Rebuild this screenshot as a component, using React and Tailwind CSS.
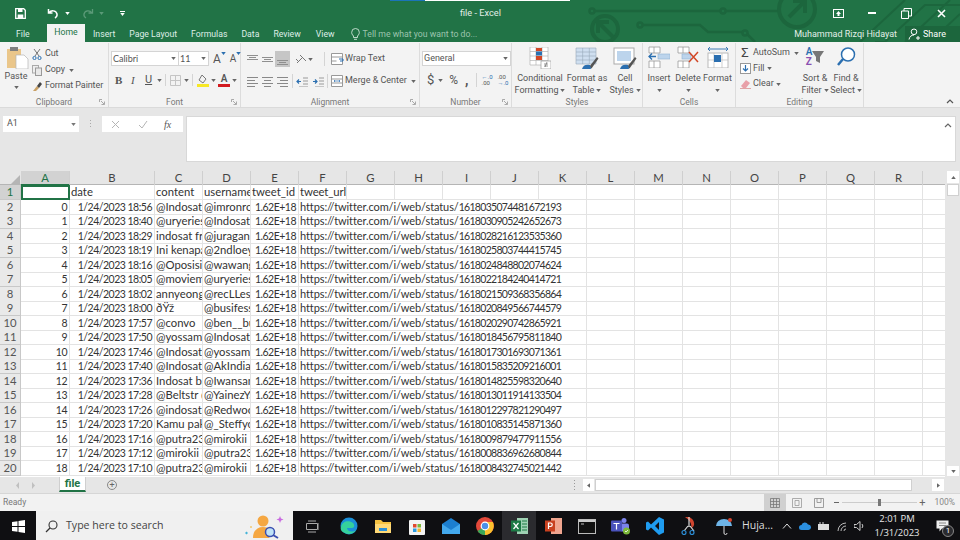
const rowGrid = "grid grid-cols-[21px_49px_85px_repeat(16,48px)_22px]";
const colLetters = "A B C D E F G H I J K L M N O P Q R".split(" ");

const rows = [
  ["0", "1/24/2023 18:56", "@IndosatCare halo", "@imronrosyadi", "1618035074481672193"],
  ["1", "1/24/2023 18:40", "@uryeries halo", "@IndosatCare", "1618030905242652673"],
  ["2", "1/24/2023 18:29", "indosat free", "@juraganpulsa", "1618028216123535360"],
  ["3", "1/24/2023 18:19", "Ini kenapa sih", "@2ndloey", "1618025803744415745"],
  ["4", "1/24/2023 18:16", "@OposisiCerdas", "@wawangsa", "1618024848802074624"],
  ["5", "1/24/2023 18:05", "@moviemenfess", "@uryeries", "1618022184240414721"],
  ["6", "1/24/2023 18:02", "annyeong", "@recLLes", "1618021509368356864"],
  ["7", "1/24/2023 18:00", "\u00F0\u0178\u017E", "@busifess", "1618020849566744579"],
  ["8", "1/24/2023 17:57", "@convo", "@ben__bu", "1618020290742865921"],
  ["9", "1/24/2023 17:50", "@yossamuel", "@IndosatCare", "1618018456795811840"],
  ["10", "1/24/2023 17:46", "@IndosatCare", "@yossamuel", "1618017301693071361"],
  ["11", "1/24/2023 17:40", "@IndosatCare", "@AkIndianto", "1618015835209216001"],
  ["12", "1/24/2023 17:36", "Indosat bayar", "@Iwansan", "1618014825598320640"],
  ["13", "1/24/2023 17:28", "@Beltstr @a", "@YainezYa", "1618013011914133504"],
  ["14", "1/24/2023 17:26", "@indosat", "@Redwoods", "1618012297821290497"],
  ["15", "1/24/2023 17:20", "Kamu pakai", "@_Steffycia", "1618010835145871360"],
  ["16", "1/24/2023 17:16", "@putra23", "@mirokii", "1618009879477911556"],
  ["17", "1/24/2023 17:12", "@mirokii apa", "@putra23", "1618008836962680844"],
  ["18", "1/24/2023 17:10", "@putra23", "@mirokii", "1618008432745021442"],
];

function Caret({ className = "" }) {
  return (
    <svg viewBox="0 0 6 4" className={"w-[5px] h-[3px] shrink-0 " + className}>
      <path d="M0 0h6L3 4z" fill="currentColor" />
    </svg>
  );
}

function Ico({ w = 14, h = 14, className = "", children }) {
  return (
    <svg width={w} height={h} viewBox={`0 0 ${w} ${h}`} className={"shrink-0 " + className}>
      {children}
    </svg>
  );
}

function TitleArt() {
  return (
    <svg width="960" height="42" viewBox="0 0 960 42" className="absolute inset-0 pointer-events-none" fill="none" stroke="#1c663d" strokeWidth="2.5">
      <circle cx="592" cy="11" r="2.5" />
      <path d="M594 11H721" />
      <circle cx="723" cy="11" r="2.5" />
      <path d="M725 11H778" />
      <circle cx="797" cy="9" r="18" strokeWidth="4" />
      <path d="M789 17l16-16M793 1h12v12" strokeWidth="4" />
      <circle cx="605" cy="29" r="13" strokeWidth="4" />
      <path d="M613 37L599 23M598 33V22h11" strokeWidth="4" />
      <circle cx="640" cy="25" r="2.5" />
      <path d="M642 25H700L708 32H743" />
      <circle cx="745" cy="33" r="2.5" />
      <path d="M747 34l8 8" />
      <path d="M860 42L905 0M875 42H885L925 5H960M905 42L950 0M930 42l30-28" strokeWidth="2" />
    </svg>
  );
}

function TitleBar() {
  return (
    <div className="relative h-[26px] flex items-center text-white">
      <div className="absolute top-0 left-[390px] w-[35px] h-px bg-[#1b74b8]" />
      <div className="absolute top-0 left-[425px] w-[145px] h-px bg-white" />
      <div className="relative ml-[15px] flex items-center">
        <Ico w={11} h={11}>
          <path d="M.7.7h8l1.6 1.6v8H.7z" fill="none" stroke="#fff" strokeWidth="1.3" />
          <path d="M3 1v3h4.5V1zM2.7 10V6.5h5.6V10z" fill="#fff" />
        </Ico>
        <Ico w={12} h={11} className="ml-[21px]">
          <path d="M1.5 1v4h4M2 5c2-3 7-3 8 1 .4 2-1 3.4-2 4" fill="none" stroke="#fff" strokeWidth="1.5" />
        </Ico>
        <Caret className="ml-[6px] text-white" />
        <Ico w={12} h={11} className="ml-[12px]">
          <path d="M10.5 1v4h-4M10 5C8 2 3 2 2 6c-.4 2 1 3.4 2 4" fill="none" stroke="#5b9a78" strokeWidth="1.3" />
        </Ico>
        <Caret className="ml-[5px] text-[#5b9a78]" />
        <div className="ml-[16px] flex flex-col items-center gap-px">
          <div className="w-[5px] h-px bg-white" />
          <Caret className="text-white" />
        </div>
      </div>
      <div className="absolute left-[460px] top-[6px] text-[9.2px] leading-[13px] text-[#e3efe8]">file - Excel</div>
      <div className="relative ml-auto flex items-center">
        <Ico w={11} h={9} className="mr-[24px]">
          <rect x=".5" y=".5" width="10" height="8" fill="none" stroke="#fff" />
          <path d="M5.5 2L8 5H3zM4.5 5h2v2h-2z" fill="#fff" />
        </Ico>
        <div className="w-[8px] h-[2px] bg-white mr-[25px]" />
        <Ico w={11} h={11} className="mr-[25px]">
          <path d="M.5 3h7v7.5h-7zM3 3V.5h7.5V8H8" fill="none" stroke="#fff" />
        </Ico>
        <Ico w={9} h={9} className="mr-[14px]">
          <path d="M1 1l7 7M8 1L1 8" stroke="#fff" strokeWidth="1.6" />
        </Ico>
      </div>
    </div>
  );
}

function Tabs() {
  return (
    <div className="relative h-[16px] flex items-end text-[8.7px] leading-[16px] text-[#dfeee6]">
      <span className="ml-[16px] w-[31px]">File</span>
      <div className="h-[18px] w-[38px] -mt-[2px] bg-[#f3f3f3] text-[#217346] text-center">Home</div>
      <span className="ml-[8px]">Insert</span>
      <span className="ml-[14px]">Page Layout</span>
      <span className="ml-[14px]">Formulas</span>
      <span className="ml-[14px]">Data</span>
      <span className="ml-[14px]">Review</span>
      <span className="ml-[15px]">View</span>
      <Ico w={9} h={12} className="ml-[16px] mb-[2px]">
        <path d="M2.5 8C1 6.5.7 5.5.7 4.3a3.8 3.8 0 0 1 7.6 0C8.3 5.5 8 6.5 6.5 8v1.5h-4zM3 11.3h3" fill="none" stroke="#cfe4d8" strokeWidth=".9" />
      </Ico>
      <span className="ml-[3px] text-[#9cc4ae]">Tell me what you want to do...</span>
      <span className="ml-auto text-[9px] text-[#e3efe8]">Muhammad Rizqi Hidayat</span>
      <div className="relative ml-[8px] w-[55px] h-[16px] bg-[#1c663d] flex items-center pl-[3px] text-[9px]">
        <Ico w={12} h={12}>
          <circle cx="6" cy="3.8" r="2.8" fill="none" stroke="#fff" />
          <path d="M1 11.5c.5-3 2.5-4.5 5-4.500M8 10h4M10 8v4" fill="none" stroke="#fff" />
        </Ico>
        <span className="ml-[3px] text-white">Share</span>
      </div>
    </div>
  );
}

function Launcher() {
  return (
    <Ico w={6} h={6} className="absolute right-[3px] bottom-[2px]">
      <path d="M.5 3V.5H3M2 2l3 3M5.5 2.5v3h-3" fill="none" stroke="#8a8a8a" strokeWidth=".7" />
    </Ico>
  );
}

function Group({ label, className, launcher, children }) {
  return (
    <div className={"relative shrink-0 flex flex-col mt-px border-r border-[#dcdcdc] " + className}>
      <div className="h-[54px] flex">{children}</div>
      <div className="text-center text-[8.5px] leading-[10px] text-[#777]">{label}</div>
      {launcher && <Launcher />}
    </div>
  );
}

function AlignLines({ kind }) {
  const lens = kind === "left" ? [[0, 11], [0, 8], [0, 11], [0, 8]] : kind === "right" ? [[0, 11], [3, 8], [0, 11], [3, 8]] : [[0, 11], [2, 7], [0, 11], [2, 7]];
  return (
    <Ico w={11} h={11}>
      {lens.map(([x, l], i) => (
        <rect key={i} x={x} y={1 + i * 3} width={l} height="1" fill="#888" />
      ))}
    </Ico>
  );
}

function VAlign({ pos }) {
  const start = pos === "top" ? 1 : pos === "mid" ? 3 : 6;
  return (
    <Ico w={11} h={11}>
      {[0, 2, 4].map((d, i) => (
        <rect key={i} x={i === 1 ? 2 : 0} y={start + d} width={i === 1 ? 7 : 11} height="1" fill="#8f8f8f" />
      ))}
    </Ico>
  );
}

function BigBtn({ className = "", icon, l1, l2 }) {
  return (
    <div className={"flex flex-col items-center text-[9px] leading-[12px] text-[#555] shrink-0 " + className}>
      <div className="h-[24px] mt-[3px] flex items-center">{icon}</div>
      <span className="mt-[2px] whitespace-nowrap">{l1}</span>
      <span className="flex items-center gap-[2px] whitespace-nowrap">
        {l2}
        <Caret className="text-[#666]" />
      </span>
    </div>
  );
}

function SmallGrid({ x = 0, y = 0, w = 18, h = 18, color = "#aaa" }) {
  const lines = [];
  for (let i = 0; i <= 3; i++) lines.push(<path key={"v" + i} d={`M${x + (w * i) / 3} ${y}v${h}`} stroke={color} strokeWidth=".6" />);
  for (let i = 0; i <= 4; i++) lines.push(<path key={"h" + i} d={`M${x} ${y + (h * i) / 4}h${w}`} stroke={color} strokeWidth=".6" />);
  return <g>{lines}</g>;
}

function Ribbon() {
  return (
    <div className="h-[66px] bg-[#f3f3f3] flex border-b border-[#dadada] overflow-hidden">
      {/* clipboard */}
      <Group label="Clipboard" className="w-[109px]" launcher>
        <div className="w-[32px] flex flex-col items-center text-[9px] leading-[12px] text-[#555]">
          <Ico w={23} h={23} className="mt-[3px] ml-[2px]">
            <rect x="1" y="3" width="14" height="19" fill="#eac68a" />
            <rect x="4" y="1" width="8" height="4" fill="#7f7f7f" />
            <path d="M10 9h8l4 4v10H10z" fill="#fff" stroke="#b5b5b5" strokeWidth=".7" />
          </Ico>
          <span className="mt-px">Paste</span>
          <Caret className="mt-[4px] text-[#666]" />
        </div>
        <div className="flex flex-col mt-[3px] text-[9px] text-[#555] tracking-[-0.1px]">
          <div className="h-[16px] flex items-center">
            <Ico w={10} h={12}>
              <path d="M2 1l5 7M8 1L3 8" stroke="#666" strokeWidth=".9" />
              <circle cx="2.5" cy="10" r="1.6" fill="none" stroke="#2b6fb0" />
              <circle cx="7.5" cy="10" r="1.6" fill="none" stroke="#2b6fb0" />
            </Ico>
            <span className="ml-[3px]">Cut</span>
          </div>
          <div className="h-[16px] flex items-center">
            <Ico w={10} h={11}>
              <rect x=".5" y=".5" width="6" height="7.5" fill="#eee" stroke="#aaa" />
              <rect x="3.5" y="3" width="6" height="7.5" fill="#e8e8e8" stroke="#999" />
            </Ico>
            <span className="ml-[3px]">Copy</span>
            <Caret className="ml-[4px] text-[#666]" />
          </div>
          <div className="h-[16px] flex items-center">
            <Ico w={11} h={11}>
              <path d="M1 10l4-5 2 2-3 3z" fill="#c9a064" />
              <path d="M5 5l3-4 2 2-3 4z" fill="#444" />
            </Ico>
            <span className="ml-[2px]">Format Painter</span>
          </div>
        </div>
      </Group>
      {/* font */}
      <Group label="Font" className="w-[132px]" launcher>
        <div className="flex flex-col pl-[2px] text-[#444]">
          <div className="flex items-center mt-[8px] h-[15px]">
            <div className="w-[68px] h-[15px] bg-white border border-[#d4d4d4] flex items-center justify-between px-px text-[9px] text-[#555] font-['Lato',sans-serif]">
              Calibri
              <Caret className="mr-px text-[#666]" />
            </div>
            <div className="w-[30px] h-[15px] bg-white border border-l-0 border-[#d4d4d4] flex items-center justify-between px-px text-[9px] text-[#555] font-['Lato',sans-serif]">
              11
              <Caret className="mr-px text-[#666]" />
            </div>
            <span className="ml-[4px] text-[12px] leading-[14px] text-[#555]">A</span>
            <Caret className="-mt-[10px] text-[#2b6fb0]" />
            <span className="ml-[4px] text-[10px] leading-[14px] text-[#555]">A</span>
            <Caret className="-mt-[10px] text-[#2b6fb0]" />
          </div>
          <div className="flex items-center mt-[6px] h-[16px] text-[#555]">
            <span className="ml-[4px] w-[16px] text-[11px] font-bold font-['Liberation_Serif',serif]">B</span>
            <span className="w-[14px] text-[11px] italic font-['Liberation_Serif',serif]">I</span>
            <span className="w-[12px] text-[11px] underline">U</span>
            <Caret className="text-[#666]" />
            <div className="w-px h-[12px] bg-[#d4d4d4] ml-[3px]" />
            <Ico w={11} h={11} className="ml-[4px]">
              <path d="M.5.5h10v10H.5zM5.5.5v10M.5 5.5h10" fill="none" stroke="#c5c5c5" />
            </Ico>
            <Caret className="ml-[3px] text-[#666]" />
            <div className="w-px h-[12px] bg-[#d4d4d4] ml-[3px]" />
            <Ico w={12} h={13} className="ml-[4px]">
              <path d="M5 1l4 4-3 4-4-3z" fill="none" stroke="#777" />
              <rect x="0" y="10" width="12" height="3" fill="#f7e826" />
            </Ico>
            <Caret className="ml-[2px] text-[#666]" />
            <div className="ml-[2px] w-[12px] flex flex-col items-center">
              <span className="text-[10px] leading-[10px] font-semibold text-[#555]">A</span>
              <div className="w-[12px] h-[3px] bg-[#d21a1f]" />
            </div>
            <Caret className="ml-[2px] text-[#666]" />
          </div>
        </div>
      </Group>
      {/* alignment */}
      <Group label="Alignment" className="w-[179px]" launcher>
        <div className="flex flex-col pl-[4px]">
          <div className="flex items-center h-[16px] mt-[8px]">
            <div className="w-[15px] flex justify-center"><VAlign pos="top" /></div>
            <div className="w-[15px] flex justify-center"><VAlign pos="mid" /></div>
            <div className="w-[15px] h-[16px] flex items-center justify-center bg-[#c6c6c6]"><VAlign pos="bot" /></div>
            <Ico w={12} h={12} className="ml-[5px]">
              <path d="M2 10l6-6M5 2l6 6M1 6l3 3" fill="none" stroke="#777" />
            </Ico>
            <Caret className="ml-px text-[#666]" />
            <div className="w-px h-[14px] bg-[#d4d4d4] ml-[11px]" />
            <Ico w={13} h={12} className="ml-[6px]">
              <path d="M.5.5h11v11H.5zM.5 4h11M.5 8h5" fill="#fff" stroke="#999" />
              <path d="M8 6h4v2H9" fill="none" stroke="#2b6fb0" />
            </Ico>
            <span className="ml-px text-[9px] text-[#555] whitespace-nowrap">Wrap Text</span>
          </div>
          <div className="flex items-center h-[16px] mt-[6px]">
            <div className="w-[15px] flex justify-center"><AlignLines kind="left" /></div>
            <div className="w-[15px] flex justify-center"><AlignLines kind="center" /></div>
            <div className="w-[15px] flex justify-center"><AlignLines kind="right" /></div>
            <div className="w-px h-[14px] bg-[#d4d4d4] ml-[2px]" />
            <Ico w={12} h={11} className="ml-[3px]">
              <path d="M7 2h5M7 5h5M7 8h5M3 11h9" stroke="#999" />
              <path d="M5 5.5H1M3 3.5l-2 2 2 2" fill="none" stroke="#2b6fb0" strokeWidth="1.2" />
            </Ico>
            <Ico w={12} h={11} className="ml-[4px]">
              <path d="M7 2h5M7 5h5M7 8h5M3 11h9" stroke="#999" />
              <path d="M1 5.5h4M3 3.5l2 2-2 2" fill="none" stroke="#2b6fb0" strokeWidth="1.2" />
            </Ico>
            <div className="w-px h-[14px] bg-[#d4d4d4] ml-[3px]" />
            <Ico w={13} h={12} className="ml-[3px]">
              <path d="M.5.5h11v11H.5zM.5 4h11M.5 8h11" fill="#fff" stroke="#999" />
              <path d="M3 6h6M4 5L3 6l1 1M8 5l1 1-1 1" fill="none" stroke="#2b6fb0" strokeWidth=".7" />
            </Ico>
            <span className="ml-px text-[9px] text-[#555] whitespace-nowrap">Merge &amp; Center</span>
            <Caret className="ml-[4px] text-[#666]" />
          </div>
        </div>
      </Group>
      {/* number */}
      <Group label="Number" className="w-[92px]" launcher>
        <div className="flex flex-col pl-[2px]">
          <div className="w-[89px] h-[15px] mt-[8px] bg-white border border-[#d4d4d4] flex items-center justify-between px-px text-[9px] text-[#555]">
            General
            <Caret className="mr-px text-[#666]" />
          </div>
          <div className="flex items-center h-[16px] mt-[6px] text-[#555]">
            <span className="ml-[5px] text-[13px] leading-[16px]">$</span>
            <Caret className="ml-[4px] text-[#666]" />
            <span className="ml-[6px] text-[12px] leading-[16px]">%</span>
            <span className="ml-[7px] text-[14px] leading-[12px] font-bold">,</span>
            <div className="w-px h-[14px] bg-[#d4d4d4] ml-[7px]" />
            <div className="ml-[5px] flex flex-col text-[6px] leading-[6px]">
              <span className="text-[#2b6fb0]">←.0</span>
              <span>.00</span>
            </div>
            <div className="ml-[5px] flex flex-col text-[6px] leading-[6px]">
              <span>.00</span>
              <span className="text-[#2b6fb0]">→.0</span>
            </div>
          </div>
        </div>
      </Group>
      {/* styles */}
      <Group label="Styles" className="w-[131px]">
        <BigBtn
          className="w-[50px] ml-[3px]"
          l1="Conditional"
          l2="Formatting"
          icon={
            <Ico w={22} h={22}>
              <rect x="1" y="0" width="18" height="18" fill="#fff" />
              <SmallGrid x={1} y={0} w={18} h={18} />
              <rect x="7" y="4.5" width="6" height="4" fill="#2b6fb0" />
              <rect x="7" y="9" width="6" height="4" fill="#d24726" />
              <rect x="7" y="1" width="6" height="3" fill="#d24726" />
              <rect x="12" y="14" width="10" height="8" fill="#fff" stroke="#999" strokeWidth=".7" />
              <path d="M15 19h4M15 17h4M16 20l2-5" stroke="#555" strokeWidth=".6" />
            </Ico>
          }
        />
        <BigBtn
          className="w-[42px] ml-px"
          l1="Format as"
          l2="Table"
          icon={
            <Ico w={24} h={22}>
              <rect x="1" y="1" width="20" height="16" fill="#cfdff0" />
              <SmallGrid x={1} y={1} w={20} h={16} color="#9ab" />
              <path d="M14 20l8-10 1.5 1.5-7 10z" fill="#555" />
              <path d="M7 22c1-4 4-5 8-4l1 4z" fill="#2b6fb0" />
            </Ico>
          }
        />
        <BigBtn
          className="w-[32px] ml-px"
          l1="Cell"
          l2="Styles"
          icon={
            <Ico w={24} h={22}>
              <rect x="1" y="1" width="20" height="16" fill="#fff" stroke="#aaa" />
              <rect x="4" y="4" width="14" height="10" fill="#bcd4ec" />
              <path d="M14 20l8-10 1.5 1.5-7 10z" fill="#555" />
              <path d="M7 22c1-4 4-5 8-4l1 4z" fill="#2b6fb0" />
            </Ico>
          }
        />
      </Group>
      {/* cells */}
      <Group label="Cells" className="w-[93px]">
        <div className="ml-[3px] w-[26px] flex flex-col items-center text-[9px] leading-[12px] text-[#555]">
          <Ico w={22} h={22} className="mt-[3px]">
            <path d="M1 1h11v6H1zM1 15h11v7H1zM6 1v6M6 15v7" fill="#fff" stroke="#999" strokeWidth=".8" />
            <rect x="10" y="8" width="12" height="5" fill="#bcd4ec" stroke="#8fb2d4" strokeWidth=".6" />
            <path d="M8 10.5H1M4 7.5l-3 3 3 3" fill="none" stroke="#2b6fb0" strokeWidth="1.3" />
          </Ico>
          <span className="mt-[4px]">Insert</span>
          <Caret className="mt-[5px] text-[#666]" />
        </div>
        <div className="ml-[2px] w-[28px] flex flex-col items-center text-[9px] leading-[12px] text-[#555]">
          <Ico w={22} h={22} className="mt-[3px]">
            <path d="M1 1h11v6H1zM1 15h11v7H1zM6 1v6M6 15v7" fill="#fff" stroke="#999" strokeWidth=".8" />
            <rect x="5" y="8" width="9" height="5" fill="#bcd4ec" stroke="#8fb2d4" strokeWidth=".6" />
            <path d="M12 6l9 10M21 6l-9 10" stroke="#d24726" strokeWidth="1.5" />
          </Ico>
          <span className="mt-[4px]">Delete</span>
          <Caret className="mt-[5px] text-[#666]" />
        </div>
        <div className="w-[31px] flex flex-col items-center text-[9px] leading-[12px] text-[#555]">
          <Ico w={22} h={22} className="mt-[3px]">
            <path d="M1 3h20M3 1L1 3l2 2M19 1l2 2-2 2" fill="none" stroke="#2b6fb0" strokeWidth=".9" />
            <rect x="1" y="7" width="20" height="15" fill="#fff" stroke="#aaa" strokeWidth=".8" />
            <path d="M7 7v15M15 7v15M1 14h20" stroke="#bbb" strokeWidth=".7" />
            <rect x="7" y="9" width="7" height="7" fill="#2b6fb0" />
          </Ico>
          <span className="mt-[4px]">Format</span>
          <Caret className="mt-[5px] text-[#666]" />
        </div>
      </Group>
      {/* editing */}
      <Group label="Editing" className="w-[128px]">
        <div className="w-[61px] ml-[3px] flex flex-col text-[9px] text-[#555]">
          <div className="h-[16px] mt-[2px] flex items-center">
            <span className="w-[12px] text-center text-[13px] leading-[14px] text-[#444]">Σ</span>
            <span className="ml-[2px]">AutoSum</span>
            <Caret className="ml-[4px] text-[#666]" />
          </div>
          <div className="h-[15px] flex items-center">
            <Ico w={11} h={11} className="ml-px">
              <rect x=".5" y=".5" width="10" height="10" fill="#fff" stroke="#999" />
              <path d="M5.5 2v6M3 5.5L5.5 8 8 5.5" fill="none" stroke="#2b6fb0" strokeWidth="1.2" />
            </Ico>
            <span className="ml-[2px]">Fill</span>
            <Caret className="ml-[2px] text-[#666]" />
          </div>
          <div className="h-[16px] flex items-center">
            <Ico w={11} h={10} className="ml-px">
              <path d="M1 7l5-6 4 3-4 5H3z" fill="#e8a0a8" />
              <path d="M0 10h11" stroke="#c55" />
            </Ico>
            <span className="ml-[2px]">Clear</span>
            <Caret className="ml-[2px] text-[#666]" />
          </div>
        </div>
        <div className="w-[30px] flex flex-col items-center text-[9px] leading-[12px] text-[#555]">
          <div className="mt-[3px] h-[22px] flex items-center">
            <div className="flex flex-col text-[10px] leading-[10px] font-semibold">
              <span className="text-[#2b6fb0]">A</span>
              <span className="text-[#8a4fb0]">Z</span>
            </div>
            <Ico w={12} h={13}>
              <path d="M0 0h12L8 6v6L4 10V6z" fill="#777" />
            </Ico>
          </div>
          <span className="mt-[4px] whitespace-nowrap">Sort &amp;</span>
          <span className="flex items-center gap-[2px] whitespace-nowrap">Filter<Caret className="text-[#666]" /></span>
        </div>
        <div className="w-[30px] ml-px flex flex-col items-center text-[9px] leading-[12px] text-[#555]">
          <Ico w={22} h={22} className="mt-[3px]">
            <circle cx="13" cy="8.5" r="6.5" fill="#fff" stroke="#2b6fb0" strokeWidth="1.5" />
            <path d="M8 13l-5 6" stroke="#2b6fb0" strokeWidth="2.5" />
          </Ico>
          <span className="mt-[4px] whitespace-nowrap">Find &amp;</span>
          <span className="flex items-center gap-[2px] whitespace-nowrap">Select<Caret className="text-[#666]" /></span>
        </div>
      </Group>
      <div className="flex-1 relative">
        <Ico w={8} h={5} className="absolute right-[6px] bottom-[3px]">
          <path d="M1 4l3-3 3 3" fill="none" stroke="#555" strokeWidth="1.2" />
        </Ico>
      </div>
    </div>
  );
}

function FormulaBar() {
  return (
    <div className="h-[63px] bg-[#e6e6e6] flex pt-[8px] pl-[3px] pr-[4px]">
      <div className="w-[76px] h-[16px] bg-white flex items-center justify-between pl-[4px] pr-[3px] text-[9px] text-[#555]">
        A1
        <Caret className="text-[#777]" />
      </div>
      <div className="w-[23px] flex flex-col items-center gap-[2px] pt-[4px]">
        <div className="size-px bg-[#aaa]" />
        <div className="size-px bg-[#aaa]" />
        <div className="size-px bg-[#aaa]" />
      </div>
      <div className="w-[81px] h-[16px] bg-white flex items-center">
        <Ico w={9} h={9} className="ml-[9px]">
          <path d="M1 1l7 7M8 1L1 8" stroke="#b5b5b5" />
        </Ico>
        <Ico w={10} h={9} className="ml-[18px]">
          <path d="M1 5l3 3 5-7" fill="none" stroke="#b5b5b5" />
        </Ico>
        <span className="ml-[16px] text-[10px] italic text-[#555] font-['Liberation_Serif',serif]">fx</span>
      </div>
      <div className="ml-[3px] relative flex-1 h-[46px] bg-white border border-[#d8d8d8]">
        <Ico w={8} h={5} className="absolute right-[3px] top-[6px]">
          <path d="M1 4l3-3 3 3" fill="none" stroke="#666" strokeWidth="1.2" />
        </Ico>
      </div>
    </div>
  );
}

function Cell({ className = "", children }) {
  return (
    <div className={"border-r border-b border-[#e3e3e3] overflow-hidden whitespace-nowrap pl-px pr-[2px] leading-[14px] " + className}>
      {children}
    </div>
  );
}

function RowHead({ n, active }) {
  return (
    <div className={"text-center leading-[14px] text-[#555] border-r border-b border-[#c8c8c8] " + (active ? "bg-[#d2d2d2] text-[#217346]" : "bg-[#e9e9e9]")}>
      {n}
    </div>
  );
}

// Calibri digits are much narrower than Lato's, so number runs get tightened
const numCell = "text-right text-[10.5px] tracking-[-0.5px]";

function Sheet() {
  return (
    <div className="h-[306px] flex bg-[#e6e6e6]">
      <div className="w-[945px] flex flex-col overflow-hidden text-[11.3px] text-[#333] font-['Lato',sans-serif]">
        <div className={rowGrid + " h-[14px] bg-[#e6e6e6] border-b border-[#b5b5b5] text-[#444]"}>
          <div className="relative">
            <div className="absolute right-px bottom-px w-0 h-0 border-l-[10px] border-l-transparent border-b-[10px] border-b-[#b5b5b5]" />
          </div>
          {colLetters.map((c, i) => (
            <div key={c} className={"text-center leading-[13px] border-r border-[#cfcfcf] " + (i === 0 ? "bg-[#d2d2d2] text-[#217346] border-b-2 border-b-[#217346]" : "")}>
              {c}
            </div>
          ))}
          <div />
        </div>
        <div className="flex-1 bg-white overflow-hidden">
          <div className={rowGrid + " h-[14.5px]"}>
            <RowHead n="1" active />
            <div className="border-2 border-[#217346]" />
            <Cell>date</Cell>
            <Cell>content</Cell>
            <Cell>username</Cell>
            <Cell>tweet_id</Cell>
            <Cell className="tracking-[-0.1px]">tweet_url</Cell>
            {colLetters.slice(6).map((c) => <Cell key={c} />)}
            <Cell className="border-r-0" />
          </div>
          {rows.map((r, i) => (
            <div key={i} className={rowGrid + " h-[14.5px]"}>
              <RowHead n={i + 2} />
              <Cell className={numCell}>{r[0]}</Cell>
              <Cell className={numCell}>{r[1]}</Cell>
              <Cell className="pl-[2px]">{r[2]}</Cell>
              <Cell>{r[3]}</Cell>
              <Cell className={numCell}>1.62E+18</Cell>
              <Cell className="col-span-6 text-[11px] tracking-[-0.1px]">
                https://twitter.com/i/web/status/<span className="text-[10.5px] tracking-[-0.7px]">{r[4]}</span>
              </Cell>
              {colLetters.slice(11).map((c) => <Cell key={c} />)}
              <Cell className="border-r-0" />
            </div>
          ))}
        </div>
      </div>
      <div className="flex-1 flex flex-col items-center bg-[#e6e6e6] pl-px">
        <div className="size-[12px] bg-white flex items-center justify-center">
          <Caret className="rotate-180 text-[#666]" />
        </div>
        <div className="size-[12px] mt-px bg-white border border-[#d0d0d0]" />
        <div className="flex-1" />
        <div className="w-[12px] h-[10px] mb-px bg-white flex items-center justify-center">
          <Caret className="text-[#666]" />
        </div>
      </div>
    </div>
  );
}

function SheetBar() {
  return (
    <div className="h-[17px] bg-[#e6e6e6] flex items-start border-b border-[#d6d6d6]">
      <Ico w={5} h={7} className="ml-[15px] mt-[5px]">
        <path d="M4 0L1 3.5 4 7z" fill="#c0c0c0" />
      </Ico>
      <Ico w={5} h={7} className="ml-[11px] mt-[5px]">
        <path d="M1 0l3 3.5L1 7z" fill="#c0c0c0" />
      </Ico>
      <div className="ml-[23px] w-[27px] h-[15px] bg-white border-b-2 border-b-[#217346] border-x border-x-[#cfcfcf] text-center text-[11px] leading-[13px] font-bold text-[#217346]">file</div>
      <div className="ml-[21px] mt-[3px] size-[10px] rounded-full border border-[#888] flex items-center justify-center text-[9px] leading-[8px] text-[#666]">+</div>
      <div className="ml-[457px] mt-[3px] flex flex-col gap-[2px]">
        <div className="size-px bg-[#999]" />
        <div className="size-px bg-[#999]" />
        <div className="size-px bg-[#999]" />
        <div className="size-px bg-[#999]" />
      </div>
      <div className="ml-[8px] mt-[2px] w-[11px] h-[12px] bg-white flex items-center justify-center">
        <Caret className="rotate-90 text-[#666]" />
      </div>
      <div className="ml-px mt-[2px] w-[317px] h-[12px] bg-white border border-[#d0d0d0]" />
      <div className="ml-[20px] mt-[2px] size-[12px] bg-white flex items-center justify-center">
        <Caret className="-rotate-90 text-[#666]" />
      </div>
    </div>
  );
}

function StatusBar() {
  return (
    <div className="h-[17px] bg-[#f2f2f2] flex items-center text-[8.5px] text-[#777]">
      <span className="ml-[3px]">Ready</span>
      <div className="ml-auto flex items-center h-full">
        <div className="w-[22px] h-full bg-[#d0d0d0] flex items-center justify-center">
          <Ico w={10} h={10}>
            <path d="M.5.5h9v9h-9zM3.5.5v9M6.5.5v9M.5 3.5h9M.5 6.5h9" fill="none" stroke="#777" strokeWidth=".8" />
          </Ico>
        </div>
        <div className="w-[22px] flex justify-center">
          <Ico w={10} h={10}>
            <path d="M.5.5h9v9h-9zM3 2.5h4v5H3z" fill="none" stroke="#999" strokeWidth=".8" />
          </Ico>
        </div>
        <div className="w-[22px] flex justify-center">
          <Ico w={10} h={10}>
            <path d="M.5 9.5v-9h9v9zM3 .5v4h4v-4" fill="none" stroke="#888" strokeWidth=".8" />
          </Ico>
        </div>
        <div className="ml-[4px] w-[5px] h-px bg-[#666]" />
        <div className="relative ml-[3px] w-[75px] h-px bg-[#ccc]">
          <div className="absolute left-[36px] -top-[3px] w-[3px] h-[7px] bg-[#777]" />
        </div>
        <span className="ml-[2px] text-[11px] leading-[10px] text-[#666]">+</span>
        <span className="ml-[9px] mr-[5px] text-[8.5px] text-[#888]">100%</span>
      </div>
    </div>
  );
}

function Slot({ active, children }) {
  return (
    <div className={"relative w-[34px] h-[30px] flex items-center justify-center shrink-0 " + (active ? "bg-[#2b2b2f]" : "")}>
      {children}
      <div className="absolute bottom-0 left-[3px] right-[3px] h-px bg-[#76b9ed]" />
    </div>
  );
}

function Taskbar() {
  return (
    <div className="h-[30px] bg-[#0f0f12] flex items-center">
      <div className="w-[36px] flex justify-center">
        <Ico w={13} h={13}>
          <path d="M0 2l5.5-.8V6H0zM6.5 1L13 0v6H6.5zM0 7h5.5v4.8L0 11zM6.5 7H13v6l-6.5-1z" fill="#fff" />
        </Ico>
      </div>
      <div className="w-[257px] h-[30px] bg-[#f0f0f0] flex items-center relative">
        <Ico w={13} h={13} className="ml-[9px]">
          <circle cx="8" cy="5" r="4" fill="none" stroke="#333" strokeWidth="1.1" />
          <path d="M5 8L1 12" stroke="#333" strokeWidth="1.3" />
        </Ico>
        <span className="ml-[8px] text-[10.6px] text-[#444] font-['Open_Sans',sans-serif]">Type here to search</span>
        <Ico w={44} h={26} className="absolute left-[206px] top-[2px]">
          <path d="M3 20l1.5-1.5L6 20l-1.5 1.5z" fill="#45b4d8" />
          <path d="M8 14l1-1 1 1-1 1z" fill="#f2b632" />
          <circle cx="21" cy="8" r="5.5" fill="#f5a742" />
          <path d="M11 25c0-7 4-11 10-11s9 3 9 6l-3 5z" fill="#f5a742" />
          <circle cx="28" cy="19" r="4.5" fill="#bfe2f7" stroke="#3a4fb0" strokeWidth="1.5" />
          <path d="M31 22l5 3" stroke="#3a4fb0" strokeWidth="2" />
          <path d="M38 3l1 2.5 2.5 1-2.5 1-1 2.5-1-2.5-2.5-1 2.5-1z" fill="#c86ae0" />
        </Ico>
      </div>
      <div className="w-[39px] flex justify-center">
        <Ico w={13} h={13}>
          <path d="M2 1h8M2 12h8M.5 3.5h11v6H.5zM13 3v7" fill="none" stroke="#aaa" />
        </Ico>
      </div>
      <Slot>
        <Ico w={18} h={18}>
          <circle cx="9" cy="9" r="8.5" fill="#1a8fd8" />
          <path d="M1 10c1-6 8-7 12-4 2 2 1.5 5-1 5H7c0 3 5 5 9 2-2 4-8 5-11 3-3-1-5-3-4-6z" fill="#35d09c" />
        </Ico>
      </Slot>
      <Slot>
        <Ico w={18} h={16}>
          <path d="M1 2h6l2 2h8v11H1z" fill="#f5c242" />
          <rect x="1" y="6" width="16" height="9" fill="#ffd976" />
          <rect x="5" y="10" width="8" height="3" fill="#2b8fd8" />
        </Ico>
      </Slot>
      <Slot>
        <Ico w={16} h={17}>
          <rect x="0" y="2" width="16" height="15" rx="1" fill="#f3f3f3" />
          <rect x="4" y="6" width="3.5" height="3.5" fill="#e2492f" />
          <rect x="8.5" y="6" width="3.5" height="3.5" fill="#7db93a" />
          <rect x="4" y="10.5" width="3.5" height="3.5" fill="#2b9be0" />
          <rect x="8.5" y="10.5" width="3.5" height="3.5" fill="#f2b632" />
        </Ico>
      </Slot>
      <Slot>
        <Ico w={18} h={16}>
          <path d="M0 6l9-6 9 6v10H0z" fill="#1c7fd0" />
          <path d="M0 6l9 6 9-6v10H0z" fill="#43a9ee" />
        </Ico>
      </Slot>
      <Slot>
        <Ico w={18} h={18}>
          <circle cx="9" cy="9" r="9" fill="#e3483a" />
          <path d="M9 9l-7.5 5a9 9 0 0 0 9 3.8z" fill="#3aa757" />
          <path d="M9 5h7.8A9 9 0 0 1 9 18z" fill="#fbc02d" />
          <circle cx="9" cy="9" r="3.8" fill="#4b8fe8" stroke="#fff" strokeWidth="1.2" />
        </Ico>
      </Slot>
      <Slot active>
        <Ico w={17} h={16}>
          <rect x="6" y="0" width="11" height="16" fill="#9fd2b4" />
          <rect x="0" y="2.5" width="10" height="11" fill="#1c7a45" />
          <path d="M11 3h5M11 6h5M11 9h5M11 12h5" stroke="#1c7a45" />
          <path d="M2.5 5l5 6M7.5 5l-5 6" stroke="#fff" strokeWidth="1.2" />
        </Ico>
      </Slot>
      <Slot>
        <Ico w={17} h={16}>
          <rect x="6" y="0" width="11" height="16" fill="#f0a58f" />
          <rect x="0" y="2.5" width="10" height="11" fill="#c8401f" />
          <path d="M3.5 11V5h2a1.5 1.5 0 0 1 0 3.5h-2" fill="none" stroke="#fff" strokeWidth="1.2" />
        </Ico>
      </Slot>
      <Slot>
        <Ico w={18} h={15}>
          <rect x=".5" y=".5" width="17" height="14" fill="#111" stroke="#bbb" />
          <rect x="1" y="1" width="16" height="2" fill="#ccc" />
          <path d="M3 5h3" stroke="#bbb" />
        </Ico>
      </Slot>
      <Slot>
        <Ico w={20} h={18}>
          <circle cx="13" cy="3.5" r="2.5" fill="#7b83eb" />
          <rect x="9" y="6.5" width="9" height="8" rx="2" fill="#7b83eb" />
          <rect x="0" y="3.5" width="11" height="11" rx="1" fill="#4b53bc" />
          <path d="M2.5 6.5h6M5.5 6.5v6" stroke="#fff" strokeWidth="1.2" />
          <circle cx="15.5" cy="14" r="3.5" fill="#7db93a" />
          <path d="M14 14l1 1 2-2" fill="none" stroke="#fff" strokeWidth=".8" />
        </Ico>
      </Slot>
      <Slot>
        <Ico w={18} h={18}>
          <path d="M13 0l5 2.5v13L13 18l-8-7.5-3 3-2-1v-7l2-1 3 3zM13 5L9 9l4 4z" fill="#1f9cf0" fillRule="evenodd" />
        </Ico>
      </Slot>
      <Slot>
        <Ico w={16} h={18}>
          <path d="M4 0c5-1 10 3 9 8-.5 2-2 3-3 3 1-3 0-7-6-11z" fill="#d0452f" />
          <path d="M8 0v10M7 9l-4 5M9 9l4 5" stroke="#ddd" strokeWidth="1.2" />
          <circle cx="3" cy="15.5" r="2" fill="none" stroke="#2b8fd8" strokeWidth="1.2" />
          <circle cx="11" cy="15.5" r="2" fill="none" stroke="#2b8fd8" strokeWidth="1.2" />
        </Ico>
      </Slot>
      <div className="ml-[9px] flex items-center">
        <Ico w={18} h={18}>
          <path d="M1 9a8 7 0 0 1 16 0z" fill="#6fb5e8" />
          <path d="M9 9v7a1.5 1.5 0 0 0 3 0" fill="none" stroke="#ddd" />
          <circle cx="15" cy="3" r="2" fill="#d8452f" />
        </Ico>
        <span className="ml-[9px] text-[10.5px] text-[#ddd] font-['Open_Sans',sans-serif]">Huja...</span>
      </div>
      <div className="ml-auto flex items-center">
        <Ico w={10} h={6}>
          <path d="M1 5.5L5 1l4 4.5" fill="none" stroke="#ddd" />
        </Ico>
        <Ico w={12} h={8} className="ml-[7px]">
          <path d="M2.5 8a2.5 2.5 0 0 1 0-5A3.5 3.5 0 0 1 9 2.5 2.7 2.7 0 0 1 9.5 8z" fill="#2b8fe0" />
        </Ico>
        <Ico w={12} h={8} className="ml-[7px]">
          <rect x="0" y="2" width="11" height="6" fill="#ddd" />
          <path d="M2 0v2M5 0v2" stroke="#ddd" />
        </Ico>
        <Ico w={11} h={9} className="ml-[7px]">
          <path d="M1 9a8 8 0 0 1 8-8M4 9a5 5 0 0 1 5-5M7 9a2 2 0 0 1 2-2" fill="none" stroke="#bbb" />
        </Ico>
        <Ico w={11} h={10} className="ml-[6px]">
          <path d="M0 3.5h2.5L6 .5v9l-3.5-3H0zM8 3a3 3 0 0 1 0 4" fill="none" stroke="#ccc" />
        </Ico>
        <div className="w-[64px] flex flex-col items-center text-[9.5px] leading-[14px] text-[#e6e6e6] font-['Open_Sans',sans-serif]">
          <span>2:01 PM</span>
          <span>1/31/2023</span>
        </div>
        <div className="w-[26px] mr-[5px] relative flex justify-center">
          <Ico w={13} h={12}>
            <path d="M.5.5h12v8H6l-2.5 3v-3h-3z" fill="#eee" />
            <path d="M3 3h7M3 5.5h7" stroke="#888" />
          </Ico>
          <div className="absolute left-[13px] top-[5px] size-[12px] rounded-full bg-[#2a2a2e] border border-[#888] text-center text-[8px] leading-[10px] text-white">1</div>
        </div>
      </div>
    </div>
  );
}

export default function App() {
  return (
    <div className="w-[960px] h-[540px] overflow-hidden bg-white font-['Roboto',sans-serif]">
      <div className="relative bg-[#217346]">
        <TitleArt />
        <TitleBar />
        <Tabs />
      </div>
      <Ribbon />
      <FormulaBar />
      <Sheet />
      <SheetBar />
      <StatusBar />
      <Taskbar />
    </div>
  );
}
